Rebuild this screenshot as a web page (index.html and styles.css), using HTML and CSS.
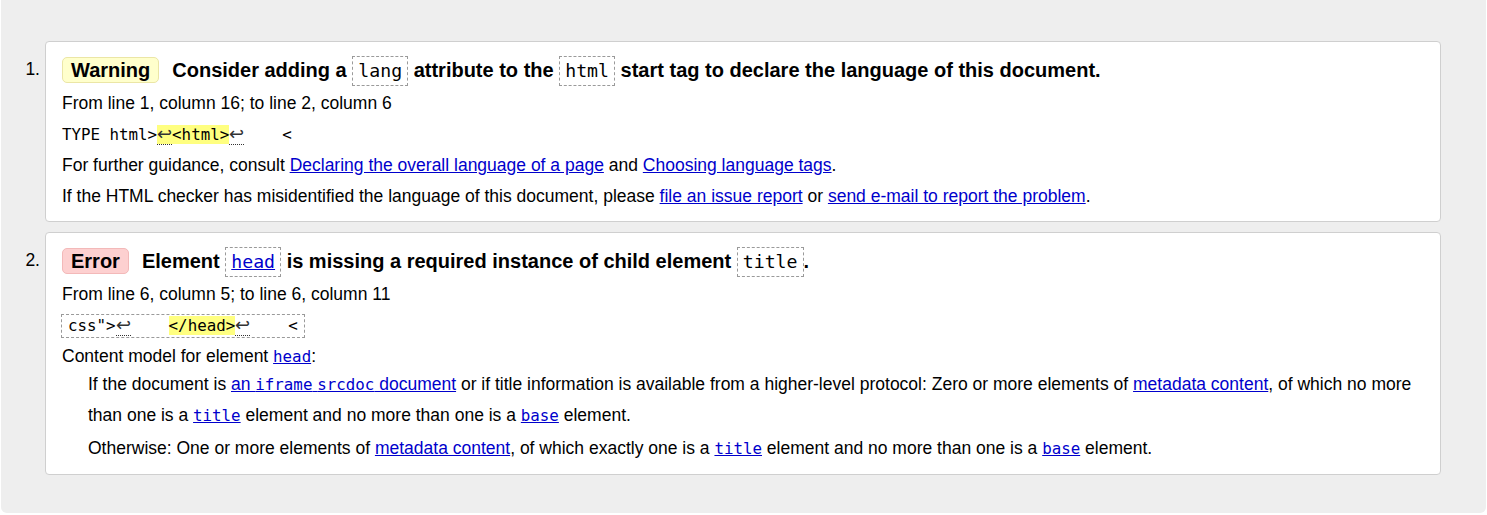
FILE: index.html
```html
<!DOCTYPE html>
<html lang="en">
<head>
<meta charset="utf-8">
<title>Messages</title>
<link rel="stylesheet" href="styles.css">
</head>
<body>
<div class="panel">
  <ol class="msgs">
    <li class="msg">
      <div class="num">1.</div>
      <div class="card">
        <p class="head"><span class="badge warn">Warning</span>Consider adding a <code class="box">lang</code> attribute to the <code class="box">html</code> start tag to declare the language of this document.</p>
        <p class="line">From line 1, column 16; to line 2, column 6</p>
        <p class="line"><code class="extract">TYPE html&gt;<mark><span class="lf">↩</span>&lt;html&gt;</mark><span class="lf">↩</span>    &lt;</code></p>
        <p class="line">For further guidance, consult <a href="#">Declaring the overall language of a page</a> and <a href="#">Choosing language tags</a>.</p>
        <p class="line">If the HTML checker has misidentified the language of this document, please <a href="#">file an issue report</a> or <a href="#">send e-mail to report the problem</a>.</p>
      </div>
    </li>
    <li class="msg">
      <div class="num">2.</div>
      <div class="card card2">
        <p class="head"><span class="badge err">Error</span>Element <code class="box"><a href="#">head</a></code> is missing a required instance of child element <code class="box">title</code>.</p>
        <p class="line">From line 6, column 5; to line 6, column 11</p>
        <p class="line"><code class="extract boxed">css"&gt;<span class="lf">↩</span>    <mark>&lt;/head&gt;</mark><span class="lf">↩</span>    &lt;</code></p>
        <p class="cm">Content model for element <a href="#"><code class="mono">head</code></a>:</p>
        <div class="dd">
          <p class="line">If the document is <a href="#">an <code class="mono">iframe</code> <code class="mono">srcdoc</code> document</a> or if title information is available from a higher-level protocol: Zero or more elements of <a href="#">metadata content</a>, of which no more than one is a <a href="#"><code class="mono">title</code></a> element and no more than one is a <a href="#"><code class="mono">base</code></a> element.</p>
          <p class="line gap">Otherwise: One or more elements of <a href="#">metadata content</a>, of which exactly one is a <a href="#"><code class="mono">title</code></a> element and no more than one is a <a href="#"><code class="mono">base</code></a> element.</p>
        </div>
      </div>
    </li>
  </ol>
</div>
</body>
</html>
```

FILE: styles.css
```css
html, body {
  margin: 0;
  padding: 0;
  background: #fff;
}

body {
  font-family: "Liberation Sans", Arial, sans-serif;
  font-size: 17.5px;
  color: #000;
}

.panel {
  box-sizing: border-box;
  margin-left: 1px;
  width: 1485px;
  height: 513px;
  background: #eeeeee;
  border-radius: 0 0 6px 6px;
  padding: 41px 45px 0 0;
}

.msgs {
  list-style: none;
  margin: 0;
  padding: 0;
}

.msg {
  display: flex;
  margin-bottom: 10px;
}

.num {
  box-sizing: border-box;
  width: 44px;
  padding: 10px 5px 0 0;
  text-align: right;
  line-height: 36px;
}

.card {
  flex: 1;
  background: #fff;
  border: 1px solid #cfcfcf;
  border-radius: 4px;
  padding: 10px 16px 9px 16px;
}

.card2 {
  padding-bottom: 10px;
}

p {
  margin: 0;
}

.head {
  font-size: 20px;
  font-weight: bold;
  line-height: 36px;
  height: 36px;
  white-space: nowrap;
}

.badge {
  display: inline-block;
  line-height: 24px;
  padding: 0 8px;
  border-radius: 5px;
  margin-right: 13px;
  border: 1px solid;
  vertical-align: 0;
}

.warn {
  background: #ffffcc;
  border-color: #ebe6a6;
}

.err {
  background: #fdd0d0;
  border-color: #f3b9b9;
}

.box {
  display: inline-block;
  font-family: "DejaVu Sans Mono", "Liberation Mono", monospace;
  font-weight: normal;
  font-size: 18.2px;
  line-height: 22px;
  padding: 3px 5px;
  border: 1px dashed #9a9a9a;
}

.line {
  line-height: 31px;
  height: 31px;
}

.dd .line {
  height: auto;
}

.extract {
  font-family: "DejaVu Sans Mono", "Liberation Mono", monospace;
  font-size: 15.8px;
  line-height: 20px;
  white-space: pre;
}

.extract.boxed {
  display: inline-block;
  line-height: 22px;
  padding: 0 6px;
  margin-left: -1px;
  border: 1px dashed #9a9a9a;
}

mark {
  background: #ffff80;
  color: #000;
}

.lf {
  font-family: "DejaVu Sans", sans-serif;
  font-size: 17.6px;
  font-weight: 200;
  color: #333;
  line-height: 16px;
  border-bottom: 1px dotted #333;
}

.mono {
  font-family: "DejaVu Sans Mono", "Liberation Mono", monospace;
  font-size: 15.8px;
  line-height: 20px;
}

a {
  color: #0000cc;
  text-decoration: underline;
}

.cm {
  line-height: 25px;
  height: 25px;
  padding-top: 3px;
}

.dd {
  margin-left: 26px;
}

.gap {
  margin-top: 2px;
}
```
